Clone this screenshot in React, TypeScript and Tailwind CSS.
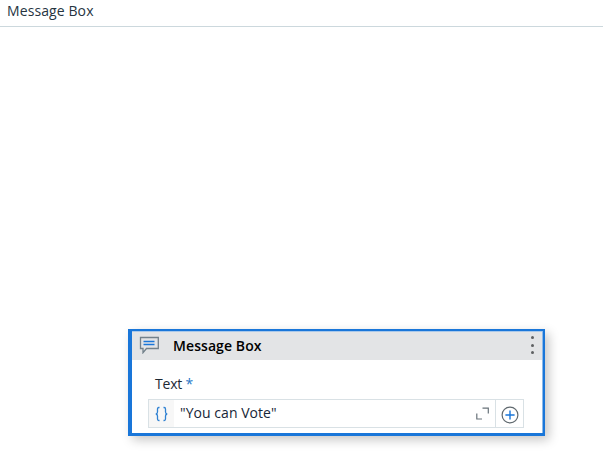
import React from "react";

function CommentIcon() {
  return (
    <svg className="-mt-[3px] h-[18px] w-5 shrink-0" viewBox="0 0 20 18" fill="none">
      <path d="M1.5 1.5H19.3V12.5H7.5L4 16.7V12.5H1.5Z" stroke="#73818b" strokeWidth="1.3" />
      <path d="M4.5 5.5H15.5M4.5 8.5H15.5" stroke="#1976d9" strokeWidth="1.3" />
    </svg>
  );
}

function ActivityHeader() {
  return (
    <div className="flex h-[29px] items-center border-t border-[#a9c8ea] bg-[#e3e4e6] pl-[7px]">
      <CommentIcon />
      <span className="ml-[14px] text-[14px] font-semibold leading-[26px] tracking-[0.08px] text-black">
        Message Box
      </span>
      <div className="ml-auto mr-[8px] mt-[-2px] flex flex-col gap-[4.5px]">
        <span className="size-[3px] rounded-full bg-[#5e6062]" />
        <span className="size-[3px] rounded-full bg-[#5e6062]" />
        <span className="size-[3px] rounded-full bg-[#5e6062]" />
      </div>
    </div>
  );
}

function ExpressionField() {
  return (
    <div className="ml-4 flex h-[29px] w-[376px] border border-[#d9e1e5] bg-white">
      <div className="flex w-[25px] items-center justify-center bg-[#f7f7f7]">
        <svg className="h-4 w-[13px]" viewBox="0 0 13 16" fill="none" stroke="#2f81d2" strokeWidth="1.3">
          <path d="M4.5 1.5H3.8Q2.5 1.5 2.5 3V6Q2.5 7.8 0.8 8Q2.5 8.2 2.5 10V13Q2.5 14.5 3.8 14.5H4.5" />
          <path d="M8.5 1.5H9.2Q10.5 1.5 10.5 3V6Q10.5 7.8 12.2 8Q10.5 8.2 10.5 10V13Q10.5 14.5 9.2 14.5H8.5" />
        </svg>
      </div>
      <span className="ml-[6px] text-[14px] leading-[26px] tracking-[0.05px] text-[#172638]">
        "You can Vote"
      </span>
      <div className="ml-auto flex items-center">
        <svg className="mb-px mr-[6px] h-[13px] w-[13px]" viewBox="0 0 13 13" fill="none" stroke="#69737a" strokeWidth="1.2">
          <path d="M6.5 1.2H12.3V6.5M0.8 6.5V12H6" />
        </svg>
        <div className="flex h-[27px] w-7 items-center justify-center border-l border-[#d9e1e5]">
          <svg className="mt-[2px] h-[18px] w-[18px]" viewBox="0 0 18 18" fill="none">
            <circle cx="9" cy="9" r="7.9" stroke="#5f686e" strokeWidth="1.2" />
            <path d="M9 4.4V13.6M4.4 9H13.6" stroke="#1976d9" strokeWidth="1.4" />
          </svg>
        </div>
      </div>
    </div>
  );
}

export default function App() {
  return (
    <main className="flex h-[456px] w-[603px] flex-col overflow-hidden bg-white font-['Open_Sans','Noto_Sans',sans-serif]">
      <header className="h-[27px] border-b border-[#ccd8dd] pl-[7px] text-[14px] leading-[21px] tracking-[0.1px] text-[#26343f]">
        Message Box
      </header>
      <section className="ml-32 mt-[302px] h-[107px] w-[417px] border-b-[3px] border-l-4 border-r-2 border-t-2 border-[#1976d9] bg-white shadow-[4px_4px_10px_rgba(0,0,0,0.22)]">
        <div className="h-full border-r border-[#8bb9ea]">
          <ActivityHeader />
          <div className="ml-[23px] mt-[13px] h-[26px] text-[14px] leading-[21px] tracking-[-0.2px] text-[#1d2934]">
            Text <span className="text-[#2878c8]">*</span>
          </div>
          <ExpressionField />
        </div>
      </section>
    </main>
  );
}
